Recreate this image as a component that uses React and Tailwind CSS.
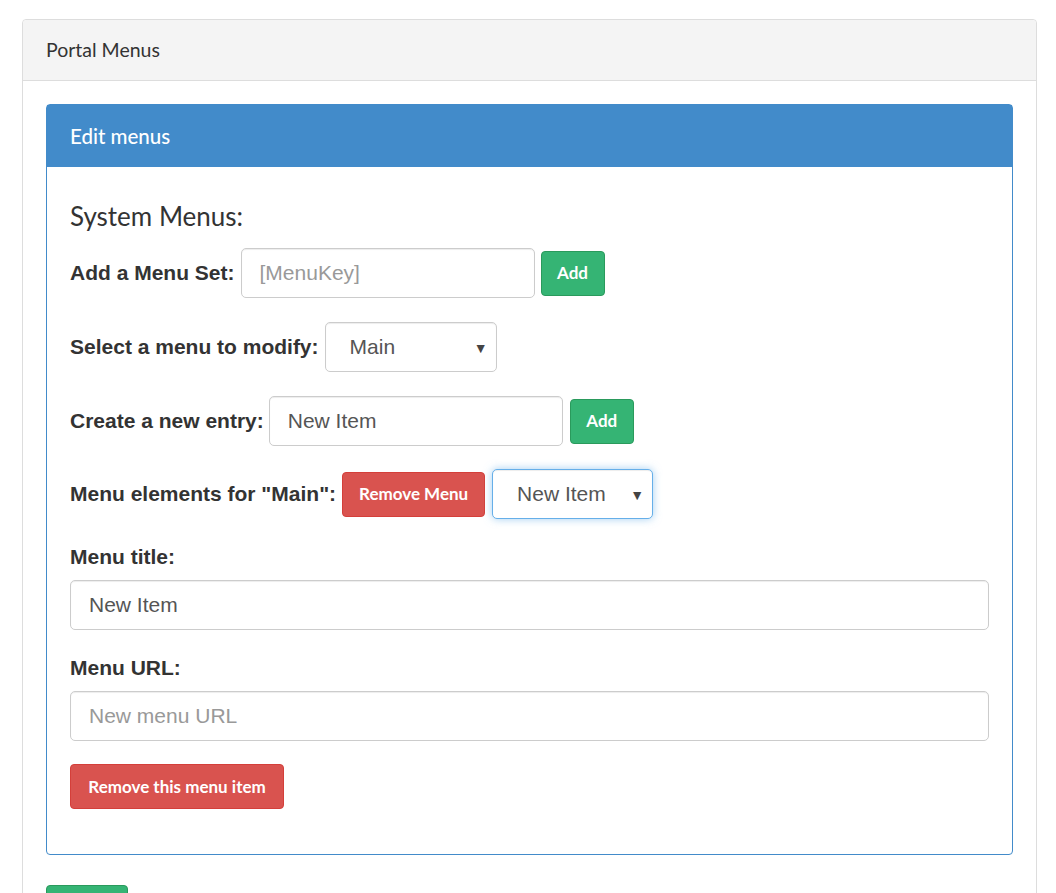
// Portal Menus — edit menus panel
const heading = { fontFamily: "Lato, 'Open Sans', sans-serif" };

const inputCls =
  "h-[50px] rounded-[5px] border border-[#ccc] bg-white px-[18px] text-[21px] text-[#555] placeholder:text-[#999] shadow-[inset_0_1px_1px_rgba(0,0,0,0.075)] outline-none font-['Liberation_Sans',Arial,sans-serif]";

const Label = ({ children }) => (
  <label className="text-[21px] leading-[28px] font-bold text-[#333] font-['Liberation_Sans',Arial,sans-serif] whitespace-nowrap">
    {children}
  </label>
);

const Btn = ({ color = "green", className = "", children }) => (
  <button
    style={heading}
    className={
      "h-[45px] rounded-[4px] border text-[17px] font-bold text-white " +
      (color === "green"
        ? "bg-[#35b474] border-[#2a9a5c] "
        : "bg-[#d9534f] border-[#d43f3a] ") +
      className
    }
  >
    {children}
  </button>
);

const Select = ({ value, focused, className = "" }) => (
  <div className={"relative " + className}>
    <select
      defaultValue={value}
      className={
        "h-[50px] w-full appearance-none rounded-[5px] border bg-white pl-[24px] pr-8 text-[21px] text-[#555] outline-none font-['Liberation_Sans',Arial,sans-serif] " +
        (focused
          ? "border-[#66afe9] shadow-[inset_0_1px_1px_rgba(0,0,0,0.075),0_0_8px_rgba(102,175,233,0.6)]"
          : "border-[#ccc] shadow-[inset_0_1px_1px_rgba(0,0,0,0.075)]")
      }
    >
      <option>{value}</option>
    </select>
    <span className="pointer-events-none absolute right-[9px] top-[15px] text-[14px] text-[#444]">▼</span>
  </div>
);

export default function App() {
  return (
    <div className="min-h-screen bg-white pl-[22px] pr-[19px] pt-[19px]">
      <div className="rounded-[4px] border border-[#ddd]">
        {/* outer panel header */}
        <div
          style={heading}
          className="flex h-[61px] items-center rounded-t-[4px] border-b border-[#ddd] bg-[#f4f4f4] px-[23px] text-[19.5px] text-[#333]"
        >
          Portal Menus
        </div>

        <div className="p-[23px]">
          {/* inner blue panel */}
          <div className="rounded-[4px] border border-[#428bca]">
            <div
              style={heading}
              className="flex h-[62px] items-center bg-[#428bca] px-[23px] text-[20.5px] font-medium text-white"
            >
              Edit menus
            </div>

            <div className="px-[23px] pb-[45px] pt-[35px]">
              <h3 style={heading} className="text-[26px] leading-[28px] text-[#333]">
                System Menus:
              </h3>

              <div className="mt-[18px] flex flex-col">
                <div className="flex h-[50px] items-center">
                  <Label>Add a Menu Set:</Label>
                  <input className={inputCls + " ml-[6px] w-[294px]"} placeholder="[MenuKey]" />
                  <Btn className="ml-[6px] w-[64px]">Add</Btn>
                </div>

                <div className="mt-[24px] flex h-[50px] items-center">
                  <Label>Select a menu to modify:</Label>
                  <Select value="Main" className="ml-[6px] w-[172px]" />
                </div>

                <div className="mt-[24px] flex h-[50px] items-center">
                  <Label>Create a new entry:</Label>
                  <input className={inputCls + " ml-[5px] w-[294px]"} defaultValue="New Item" />
                  <Btn className="ml-[7px] w-[64px]">Add</Btn>
                </div>

                <div className="mt-[23px] flex h-[50px] items-center">
                  <Label>Menu elements for "Main":</Label>
                  <Btn color="red" className="ml-[6px] w-[143px]">Remove Menu</Btn>
                  <Select value="New Item" focused className="ml-[7px] w-[161px]" />
                </div>
              </div>

              <div className="mt-[24px] flex flex-col">
                <Label>Menu title:</Label>
                <input className={inputCls + " mt-[9px] w-full"} defaultValue="New Item" />
              </div>

              <div className="mt-[24px] flex flex-col">
                <Label>Menu URL:</Label>
                <input className={inputCls + " mt-[9px] w-full"} placeholder="New menu URL" />
              </div>

              <Btn color="red" className="mt-[23px] w-[214px]">Remove this menu item</Btn>
            </div>
          </div>

          <Btn className="mt-[30px] w-[82px]">Save</Btn>
        </div>
      </div>
    </div>
  );
}
